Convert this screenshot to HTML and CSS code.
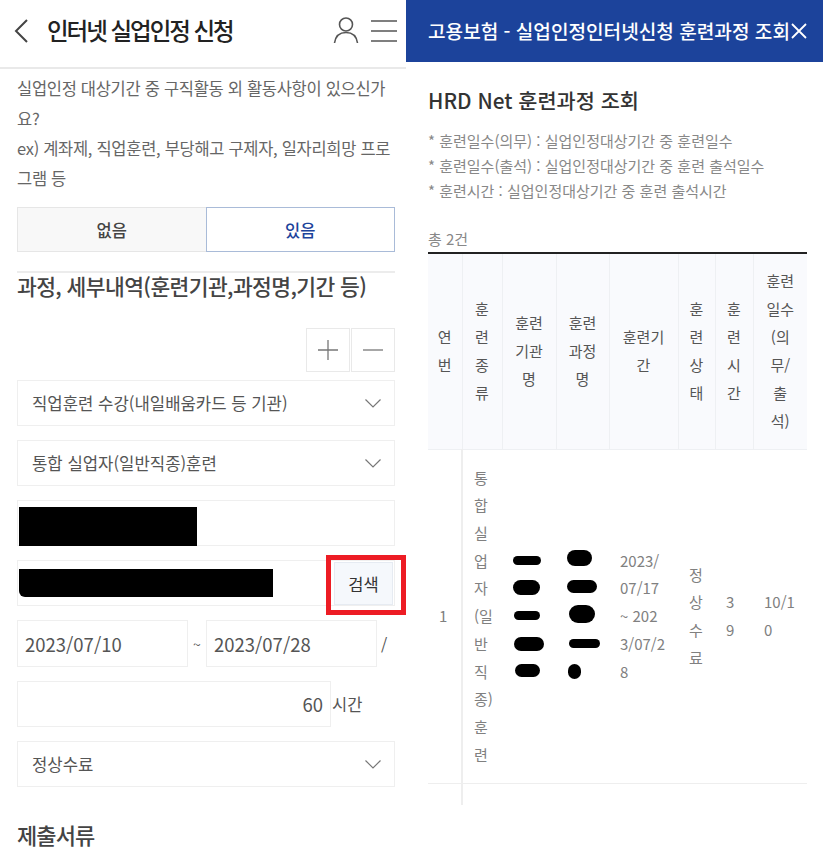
FILE: index.html
```html
<!DOCTYPE html>
<html lang="ko">
<head>
  <meta charset="UTF-8">
  <meta name="viewport" content="width=device-width, initial-scale=1.0">
  <title>인터넷 실업인정 신청</title>
  <link rel="stylesheet" href="styles.css">
</head>
<body>
  <main class="left-panel">
    <header class="top-bar">
      <svg class="back-icon" width="16" height="26" viewBox="0 0 16 26"><path d="M14 2 3 13l11 11" fill="none" stroke="#444" stroke-width="2"/></svg>
      <h1>인터넷 실업인정 신청</h1>
      <svg class="user-icon" width="26" height="30" viewBox="0 0 26 30"><circle cx="13" cy="8.500" r="6.500" fill="none" stroke="#555" stroke-width="1.600"/><path d="M1.500 27c1-7 5.500-10.500 11.500-10.500S23.500 20 24.500 27" fill="none" stroke="#555" stroke-width="1.600"/></svg>
      <svg class="menu-icon" width="26" height="24" viewBox="0 0 26 24"><path d="M0 2h26M0 12h26M0 22h26" stroke="#555" stroke-width="1.600"/></svg>
    </header>

    <section class="form-body">
      <p class="question">실업인정 대상기간 중 구직활동 외 활동사항이 있으신가요?<br>ex) 계좌제, 직업훈련, 부당해고 구제자, 일자리희망 프로그램 등</p>

      <div class="toggle">
        <button class="toggle-off">없음</button>
        <button class="toggle-on">있음</button>
      </div>

      <h2 class="section-title">과정, 세부내역(훈련기관,과정명,기간 등)</h2>

      <div class="add-remove">
        <button aria-label="추가"><svg width="20" height="20" viewBox="0 0 20 20"><path d="M10 0v20M0 10h20" stroke="#777" stroke-width="1.300"/></svg></button>
        <button aria-label="삭제"><svg width="20" height="20" viewBox="0 0 20 20"><path d="M0 10h20" stroke="#777" stroke-width="1.300"/></svg></button>
      </div>

      <div class="field select">직업훈련 수강(내일배움카드 등 기관)<svg width="16" height="9" viewBox="0 0 16 9"><path d="M.5.500 8 8 15.500.500" fill="none" stroke="#777" stroke-width="1.200"/></svg></div>
      <div class="field select">통합 실업자(일반직종)훈련<svg width="16" height="9" viewBox="0 0 16 9"><path d="M.5.500 8 8 15.500.500" fill="none" stroke="#777" stroke-width="1.200"/></svg></div>
      <div class="field redacted-field"><span class="black-out black-one"></span></div>
      <div class="field redacted-field search-field">
        <span class="black-out black-two"></span>
        <button class="search-btn">검색</button>
        <span class="red-box"></span>
      </div>

      <div class="date-row">
        <div class="field date">2023/07/10</div>
        <span class="tilde">~</span>
        <div class="field date">2023/07/28</div>
        <span class="slash">/</span>
      </div>

      <div class="hours-row">
        <div class="field hours">60</div>
        <span>시간</span>
      </div>

      <div class="field select">정상수료<svg width="16" height="9" viewBox="0 0 16 9"><path d="M.5.500 8 8 15.500.500" fill="none" stroke="#777" stroke-width="1.200"/></svg></div>

      <h2 class="docs-title">제출서류</h2>
    </section>
  </main>

  <aside class="right-panel">
    <header class="popup-bar">
      <span>고용보험 - 실업인정인터넷신청 훈련과정 조회</span>
      <svg width="16" height="16" viewBox="0 0 16 16"><path d="M1 1l14 14M15 1 1 15" stroke="#fff" stroke-width="1.800"/></svg>
    </header>

    <section class="popup-body">
      <h2>HRD Net 훈련과정 조회</h2>
      <ul class="notes">
        <li>* 훈련일수(의무) : 실업인정대상기간 중 훈련일수</li>
        <li>* 훈련일수(출석) : 실업인정대상기간 중 훈련 출석일수</li>
        <li>* 훈련시간 : 실업인정대상기간 중 훈련 출석시간</li>
      </ul>
      <p class="total">총 2건</p>

      <table class="course-table">
        <colgroup>
          <col class="c1"><col class="c2"><col class="c3"><col class="c4"><col class="c5"><col class="c6"><col class="c7"><col class="c8">
        </colgroup>
        <thead>
          <tr>
            <th>연번</th><th>훈련종류</th><th>훈련기관명</th><th>훈련과정명</th><th>훈련기간</th><th>훈련상태</th><th>훈련시간</th><th>훈련일수(의무/출석)</th>
          </tr>
        </thead>
        <tbody>
          <tr class="row-one">
            <td>1</td>
            <td>통합실업자(일반직종)훈련</td>
            <td>
              <span class="blob b1"></span><span class="blob b2"></span><span class="blob b3"></span><span class="blob b4"></span><span class="blob b5"></span>
            </td>
            <td>
              <span class="blob b6"></span><span class="blob b7"></span><span class="blob b8"></span><span class="blob b9"></span><span class="blob b10"></span>
            </td>
            <td>2023/<br>07/17<br>~ 202<br>3/07/2<br>8</td>
            <td>정상수료</td>
            <td>39</td>
            <td>10/10</td>
          </tr>
          <tr class="row-two">
            <td></td><td></td><td></td><td></td><td></td><td></td><td></td><td></td>
          </tr>
        </tbody>
      </table>
    </section>
  </aside>
</body>
</html>
```

FILE: styles.css
```css
* {
  box-sizing: border-box;
  margin: 0;
  padding: 0;
}

body {
  display: flex;
  width: 823px;
  height: 859px;
  overflow: hidden;
  background: #fff;
  color: #555;
  font-family: "Noto Sans CJK KR", "Noto Sans", sans-serif;
}

button {
  font-family: inherit;
  background: #fff;
}

.left-panel {
  width: 406px;
  flex-shrink: 0;
}

.top-bar {
  display: flex;
  align-items: center;
  height: 69px;
  padding: 0 9px 6px 13px;
  border-bottom: 2px solid #e9e9e9;
}

.top-bar h1 {
  flex: 1;
  margin-left: 18px;
  font-size: 23.500px;
  font-weight: 500;
  letter-spacing: -2px;
  line-height: 30px;
  margin-bottom: 2px;
  color: #222;
}

.user-icon {
  margin-right: 12px;
}

.form-body {
  position: relative;
  padding: 4px 11px 0 17px;
}

.question {
  font-size: 16.500px;
  line-height: 30px;
  color: #666;
  letter-spacing: -.3px;
  padding-right: 2px;
}

.toggle {
  display: flex;
  height: 45px;
  margin-top: 14px;
}

.toggle button {
  flex: 1;
  font-size: 16.500px;
  font-weight: 500;
}

.toggle-off {
  background: #f8f8f8;
  border: 1px solid #e6e6e6;
  border-right: none;
  color: #444;
}

.toggle-on {
  border: 1px solid #a9bbd8;
  color: #1c439b;
}

.section-title {
  margin-top: 19px;
  border-top: 2px solid #ececec;
  font-size: 21.500px;
  font-weight: 500;
  line-height: 26px;
  letter-spacing: -.6px;
  color: #444;
}

.add-remove {
  display: flex;
  justify-content: flex-end;
  gap: 1px;
  margin-top: 29px;
}

.add-remove button {
  display: flex;
  align-items: center;
  justify-content: center;
  width: 44px;
  height: 44px;
  border: 1px solid #e9e9e9;
}

.field {
  display: flex;
  align-items: center;
  height: 46px;
  border: 1px solid #efefef;
  font-size: 16.700px;
  color: #555;
}

.select {
  justify-content: space-between;
  margin-top: 14px;
  padding: 0 13px 0 14px;
}

.add-remove + .select {
  margin-top: 8px;
}

.redacted-field {
  position: relative;
  margin-top: 14px;
}

.black-out {
  position: absolute;
  left: 1px;
  background: #000;
}

.black-one {
  top: 6px;
  width: 178px;
  height: 39px;
}

.black-two {
  top: 8px;
  width: 254px;
  height: 28px;
  border-bottom-left-radius: 6px;
}

.search-btn {
  position: absolute;
  right: 1px;
  top: 1px;
  width: 59px;
  height: 43px;
  border: 1px solid #e6ebf2;
  background: #f5f8fc;
  font-size: 16.500px;
  color: #333;
}

.red-box {
  position: absolute;
  left: 308px;
  top: -6px;
  width: 80px;
  height: 60px;
  border: 5px solid #ed1c24;
}

.date-row {
  display: flex;
  align-items: center;
  margin-top: 14px;
}

.date {
  width: 171px;
  height: 47px;
  padding-left: 7px;
  font-size: 18.500px;
  color: #555;
}

.tilde {
  width: 18px;
  text-align: center;
  font-size: 14px;
}

.slash {
  margin-left: 4px;
  font-size: 16px;
}

.hours-row {
  display: flex;
  align-items: center;
  gap: 1px;
  margin-top: 14px;
  font-size: 16.500px;
}

.hours {
  width: 314px;
  justify-content: flex-end;
  padding-right: 7px;
  font-size: 18.500px;
  color: #555;
}

.docs-title {
  margin-top: 32px;
  font-size: 22px;
  font-weight: 500;
  letter-spacing: -.9px;
  line-height: 30px;
  color: #444;
}

.right-panel {
  flex: 1;
  min-width: 0;
}

.popup-bar {
  display: flex;
  align-items: center;
  justify-content: space-between;
  height: 62px;
  padding: 0 16px 0 22px;
  background: #1c439b;
  color: #fff;
  font-size: 19.100px;
  font-weight: 500;
  white-space: nowrap;
}

.popup-body {
  padding: 22px 16px 0 22px;
}

.popup-body h2 {
  font-size: 20.800px;
  font-weight: 500;
  line-height: 32px;
  color: #333;
}

.notes {
  list-style: none;
  margin-top: 12px;
  font-size: 15px;
  line-height: 25px;
  color: #888;
}

.total {
  margin-top: 24px;
  font-size: 15px;
  line-height: 24px;
  color: #888;
}

.course-table {
  width: 379px;
  margin-top: 1px;
  table-layout: fixed;
  border-collapse: collapse;
  border-top: 2px solid #222;
  font-size: 15px;
  word-break: break-all;
}

.c1 { width: 34px; }
.c2 { width: 40px; }
.c3 { width: 54px; }
.c4 { width: 53px; }
.c5 { width: 69px; }
.c6 { width: 37px; }
.c7 { width: 38px; }
.c8 { width: 54px; }

.course-table th {
  height: 196px;
  padding: 0 11px;
  background: #f9fafd;
  border-right: 1px solid #eef0f3;
  border-bottom: 1px solid #eef0f3;
  font-weight: 400;
  line-height: 28px;
  color: #555;
}

.course-table th:first-child {
  padding: 0 9px;
}

.course-table th:last-child {
  border-right: none;
}

.row-one td {
  height: 334px;
  padding: 0 11px;
  border-bottom: 1px solid #eee;
  line-height: 27.700px;
  color: #808080;
}

.row-one td:first-child {
  padding: 0 0 0 11px;
  border-right: 2px solid #eee;
}

.row-one td:nth-child(2) {
  padding-left: 11px;
  padding-right: 6px;
}

.row-one td:nth-child(7) {
  padding-right: 18px;
}

.row-two td {
  height: 22px;
}

.row-two td:first-child {
  border-right: 2px solid #eee;
}

.blob {
  display: block;
  height: 27.700px;
  position: relative;
}

.blob::after {
  content: "";
  position: absolute;
  background: #000;
  border-radius: 9px;
}

.b1::after { left: 0; top: 9px; width: 28px; height: 9px; }
.b2::after { left: 0; top: 6px; width: 27px; height: 15px; }
.b3::after { left: 1px; top: 9px; width: 26px; height: 9px; }
.b4::after { left: 1px; top: 7px; width: 30px; height: 14px; }
.b5::after { left: 2px; top: 6px; width: 25px; height: 13px; }
.b6::after { left: 0; top: 3px; width: 25px; height: 16px; }
.b7::after { left: 0; top: 6px; width: 30px; height: 13px; }
.b8::after { left: 2px; top: 3px; width: 26px; height: 18px; }
.b9::after { left: 2px; top: 9px; width: 31px; height: 9px; }
.b10::after { left: 1px; top: 6px; width: 13px; height: 15px; }
```
